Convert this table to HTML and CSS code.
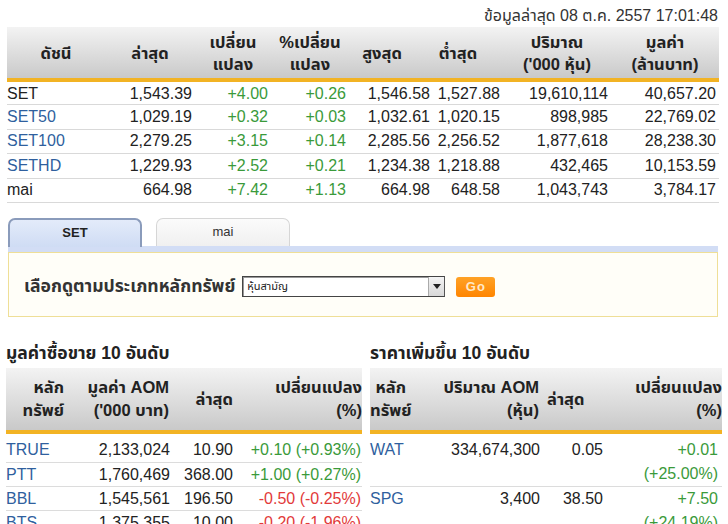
FILE: index.html
```html
<!DOCTYPE html>
<html lang="th">
<head>
<meta charset="utf-8">
<title>SET</title>
<link rel="stylesheet" href="styles.css">
</head>
<body>
<div class="stamp">ข้อมูลล่าสุด 08 ต.ค. 2557 17:01:48</div>
<table class="idx">
  <colgroup>
    <col style="width:98px"><col style="width:90px"><col style="width:76px"><col style="width:78px">
    <col style="width:84px"><col style="width:70px"><col style="width:108px"><col style="width:108px">
  </colgroup>
  <thead>
    <tr>
      <th>ดัชนี</th>
      <th>ล่าสุด</th>
      <th>เปลี่ยน<br>แปลง</th>
      <th>%เปลี่ยน<br>แปลง</th>
      <th class="sh1">สูงสุด</th>
      <th class="sh2">ต่ำสุด</th>
      <th>ปริมาณ<br>('000 หุ้น)</th>
      <th>มูลค่า<br>(ล้านบาท)</th>
    </tr>
  </thead>
  <tbody>
    <tr><td class="name">SET</td><td>1,543.39</td><td class="up">+4.00</td><td class="up">+0.26</td><td>1,546.58</td><td>1,527.88</td><td>19,610,114</td><td>40,657.20</td></tr>
    <tr><td class="name link">SET50</td><td>1,029.19</td><td class="up">+0.32</td><td class="up">+0.03</td><td>1,032.61</td><td>1,020.15</td><td>898,985</td><td>22,769.02</td></tr>
    <tr><td class="name link">SET100</td><td>2,279.25</td><td class="up">+3.15</td><td class="up">+0.14</td><td>2,285.56</td><td>2,256.52</td><td>1,877,618</td><td>28,238.30</td></tr>
    <tr><td class="name link">SETHD</td><td>1,229.93</td><td class="up">+2.52</td><td class="up">+0.21</td><td>1,234.38</td><td>1,218.88</td><td>432,465</td><td>10,153.59</td></tr>
    <tr><td class="name">mai</td><td>664.98</td><td class="up">+7.42</td><td class="up">+1.13</td><td>664.98</td><td>648.58</td><td>1,043,743</td><td>3,784.17</td></tr>
  </tbody>
</table>

<div class="tabs">
  <div class="tab active">SET</div>
  <div class="tab">mai</div>
</div>
<div class="strip"></div>
<div class="filter">
  <span class="flabel">เลือกดูตามประเภทหลักทรัพย์</span>
  <div class="select">
    <span class="sval">หุ้นสามัญ</span>
    <span class="sarrow"><svg width="8" height="5" viewBox="0 0 8 5"><path d="M0 0H8L4 5Z" fill="#222"/></svg></span>
  </div>
  <div class="go">Go</div>
</div>

<div class="tops">
  <section class="top left">
    <h2 class="ttl">มูลค่าซื้อขาย 10 อันดับ</h2>
    <table class="rank">
      <colgroup><col style="width:64px"><col style="width:104px"><col style="width:62px"><col style="width:126px"></colgroup>
      <thead>
        <tr>
          <th class="c1">หลัก<br>ทรัพย์</th>
          <th class="c2">มูลค่า AOM<br>('000 บาท)</th>
          <th class="c3">ล่าสุด</th>
          <th class="c4">เปลี่ยนแปลง<br>(%)</th>
        </tr>
      </thead>
      <tbody>
        <tr><td class="name link">TRUE</td><td class="c2">2,133,024</td><td class="c3">10.90</td><td class="c4 up">+0.10 (+0.93%)</td></tr>
        <tr><td class="name link">PTT</td><td class="c2">1,760,469</td><td class="c3">368.00</td><td class="c4 up">+1.00 (+0.27%)</td></tr>
        <tr><td class="name link">BBL</td><td class="c2">1,545,561</td><td class="c3">196.50</td><td class="c4 down">-0.50 (-0.25%)</td></tr>
        <tr><td class="name link">BTS</td><td class="c2">1,375,355</td><td class="c3">10.00</td><td class="c4 down">-0.20 (-1.96%)</td></tr>
      </tbody>
    </table>
  </section>
  <section class="top right">
    <h2 class="ttl">ราคาเพิ่มขึ้น 10 อันดับ</h2>
    <table class="rank">
      <colgroup><col style="width:44px"><col style="width:130px"><col style="width:62px"><col style="width:116px"></colgroup>
      <thead>
        <tr>
          <th class="c1">หลัก<br>ทรัพย์</th>
          <th class="c2">ปริมาณ AOM<br>(หุ้น)</th>
          <th class="c3l">ล่าสุด</th>
          <th class="c4">เปลี่ยนแปลง<br>(%)</th>
        </tr>
      </thead>
      <tbody>
        <tr><td class="name link">WAT</td><td class="c2">334,674,300</td><td class="c3">0.05</td><td class="c4 up">+0.01<br>(+25.00%)</td></tr>
        <tr><td class="name link">SPG</td><td class="c2">3,400</td><td class="c3">38.50</td><td class="c4 up">+7.50<br>(+24.19%)</td></tr>
      </tbody>
    </table>
  </section>
</div>
</body>
</html>
```
FILE: styles.css
```css
* { box-sizing: border-box; }
html, body { margin: 0; padding: 0; background: #fff; }
body {
  font-family: Tahoma, "Liberation Sans", "Noto Sans Thai", "Noto Sans", "DejaVu Sans", sans-serif;
  font-size: 16px;
  color: #222;
  overflow: hidden;
  height: 524px;
}
.stamp {
  height: 27px;
  padding: 4px 10px 0 0;
  line-height: 23px;
  text-align: right;
  font-size: 16px;
  color: #333;
}
table { border-collapse: collapse; table-layout: fixed; }
.idx { margin-left: 7px; width: 712px; }
.idx th {
  height: 53px;
  padding: 0;
  background: linear-gradient(#f3f3f3, #c9c9c9);
  border-bottom: 4px solid #f2b324;
  font-weight: bold;
  font-size: 16.5px;
  line-height: 22px;
  color: #222;
  text-align: center;
  vertical-align: middle;
  white-space: nowrap;
}
.idx th.sh1 { padding-right: 18px; }
.idx th.sh2 { padding-right: 20px; }
.idx td {
  height: 24.5px;
  padding: 0 3px 0 3px;
  border-bottom: 1px solid #d9d9d9;
  text-align: right;
  line-height: 20px;
  white-space: nowrap;
}
.idx tbody tr:first-child td { padding-top: 1px; }
td.name { text-align: left; padding-left: 0; }
.link { color: #2f5f9e; }
.up { color: #3a9a3a; }
.down { color: #e23a3a; }

.tabs {
  display: flex;
  gap: 14px;
  padding-left: 8px;
  margin-top: 15px;
  height: 28px;
}
.tab {
  width: 134px;
  height: 28px;
  border: 1px solid #d6d6d6;
  border-bottom: none;
  border-radius: 7px 7px 0 0;
  background: linear-gradient(#fbfbfb, #f0f0f0);
  font-size: 13px;
  line-height: 26px;
  text-align: center;
  color: #333;
}
.tab.active {
  border: 2px solid #8a9bbb;
  border-bottom: none;
  background: linear-gradient(#e3ebfa, #cfdcf4);
  font-weight: bold;
  color: #222;
  height: 29px;
}
.strip {
  margin-left: 8px;
  width: 710px;
  height: 6px;
  background: #d2ddf5;
}
.filter {
  margin-left: 8px;
  width: 710px;
  height: 65px;
  border: 1px solid #efdf97;
  background: #fffef8;
  display: flex;
  align-items: center;
  padding: 4px 0 0 15px;
}
.flabel {
  font-weight: bold;
  font-size: 17.6px;
  color: #333;
  margin-right: 7px;
}
.select {
  width: 203px;
  height: 21px;
  border: 1px solid #444;
  border-right-color: #555;
  background: #fff;
  display: flex;
  align-items: stretch;
  box-shadow: inset 1px 1px 0 #999;
}
.sval {
  flex: 1;
  font-size: 11px;
  line-height: 19px;
  padding-left: 4px;
  color: #222;
}
.sarrow {
  width: 16px;
  border-left: 1px solid #aaa;
  background: linear-gradient(#f4f4f4, #d8d8d8);
  display: flex;
  align-items: center;
  justify-content: center;
}
.go {
  margin-left: 11px;
  width: 39px;
  height: 20px;
  border-radius: 3px;
  background: linear-gradient(#ffa226, #ff8500);
  color: #ffe9c8;
  font-weight: bold;
  font-size: 13px;
  line-height: 20px;
  text-align: center;
  letter-spacing: 1px;
}

.tops {
  display: flex;
  gap: 8px;
  padding-left: 6px;
  margin-top: 26px;
}
.top.left { width: 356px; }
.top.right { width: 352px; }
.ttl {
  margin: 0 0 5px 0;
  height: 20px;
  font-size: 17.5px;
  line-height: 20px;
  font-weight: bold;
  color: #222;
}
.rank { width: 100%; }
.rank th {
  height: 64px;
  padding: 0;
  background: linear-gradient(#f3f3f3, #c9c9c9);
  border-bottom: 4px solid #f2b324;
  font-weight: bold;
  font-size: 16.5px;
  line-height: 23px;
  color: #222;
  vertical-align: middle;
  white-space: nowrap;
}
.rank td {
  height: 24px;
  padding: 0;
  line-height: 24px;
  border-bottom: 1px solid #dcdcdc;
  vertical-align: top;
  white-space: nowrap;
}
.left .rank td { line-height: 23px; }
.rank tbody tr:first-child td { padding-top: 4px; }
.left .rank tbody tr:first-child td { padding-top: 4px; line-height: 24px; }
.left .rank th.c1 { text-align: right; padding-right: 6px; }
.right .rank th.c1 { text-align: right; padding-right: 8px; }
.rank th.c2 { text-align: right; padding-right: 5px; }
.rank th.c3 { text-align: right; padding-right: 3px; }
.rank th.c3l { text-align: left; padding-left: 3px; }
.rank th.c4 { text-align: right; padding-right: 0; }
.rank td.c2 { text-align: right; padding-right: 4px; }
.rank td.c3 { text-align: right; padding-right: 3px; }
.rank td.c4 { text-align: right; padding-right: 1px; }
.right .rank td.c4 { padding-right: 4px; }
```
